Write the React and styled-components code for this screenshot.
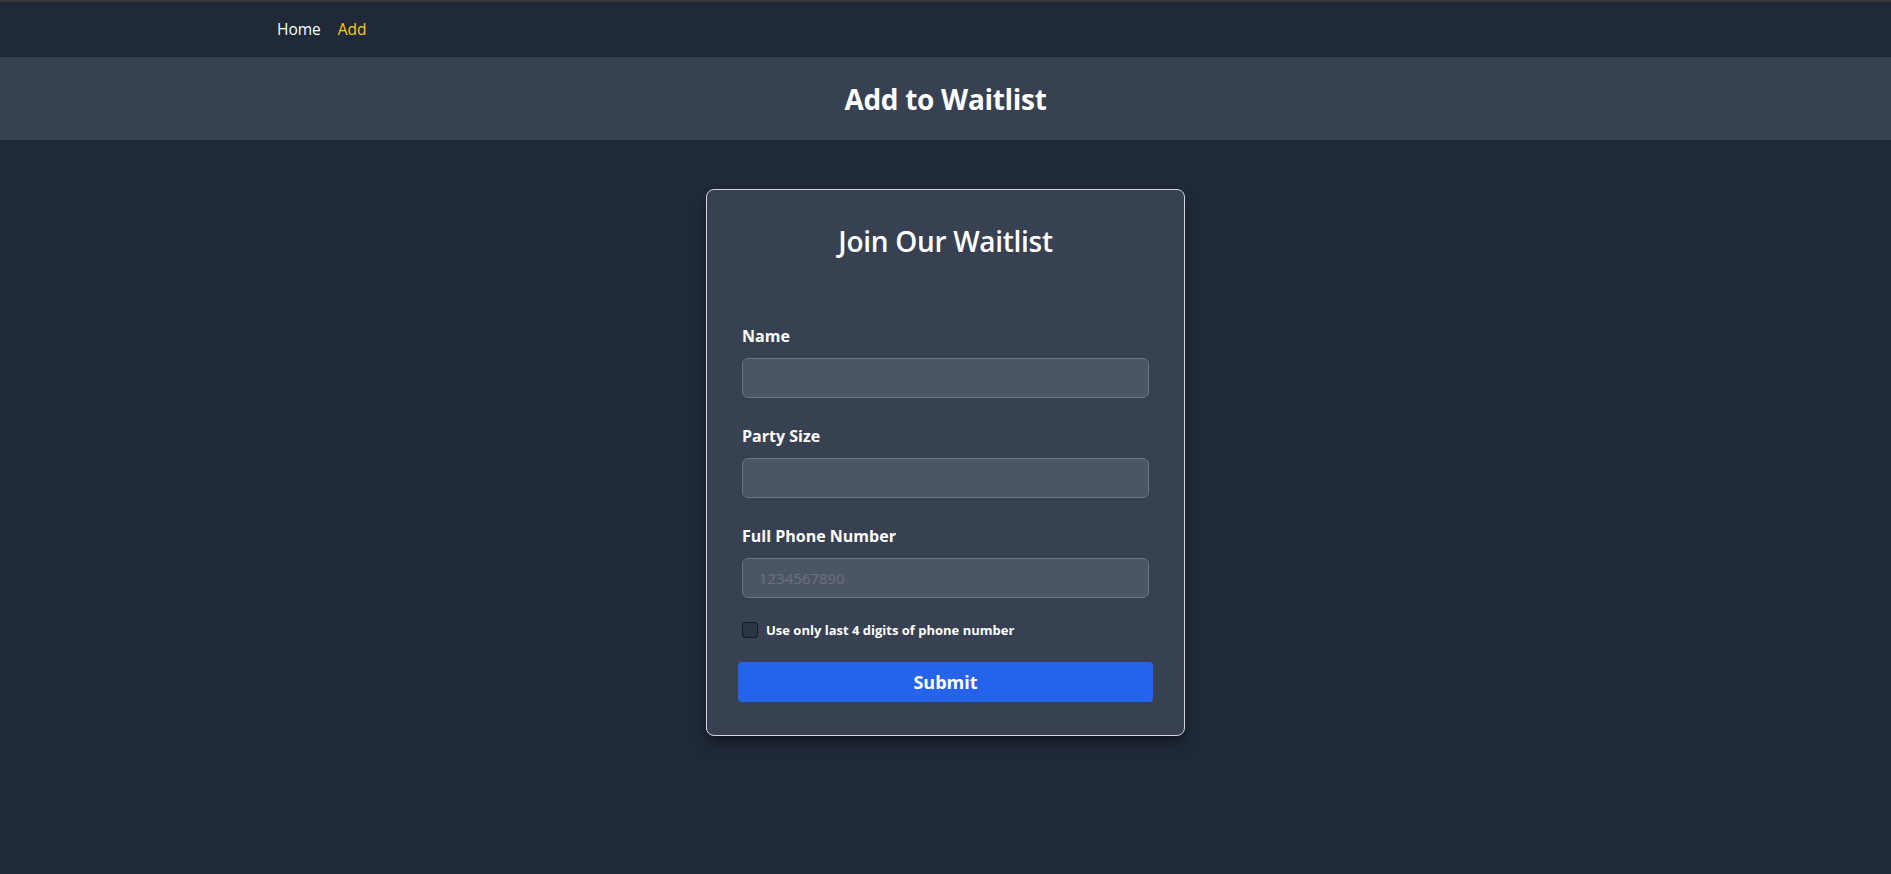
import React, {useState} from 'react';
import styled, {createGlobalStyle} from 'styled-components';

const GlobalStyle = createGlobalStyle`
  * {
    box-sizing: border-box;
  }
  body {
    margin: 0;
    background: #1f2937;
    font-family: "Open Sans", "Noto Sans", sans-serif;
    color: #fff;
  }
`;

const Page = styled.div`
  min-height: 874px;
  background: #1f2937;
  border-top: 2px solid #353535;
`;

const Nav = styled.nav`
  height: 55px;
  background: #1f2937;
`;

const NavInner = styled.div`
  max-width: 1337px;
  margin: 0 auto;
  height: 100%;
  display: flex;
  align-items: center;
  gap: 17px;
  padding-bottom: 2px;
`;

const NavLink = styled.a`
  font-size: 15.5px;
  color: ${props => (props.$active ? '#facc15' : '#fff')};
  text-decoration: none;
  cursor: pointer;
`;

const Banner = styled.header`
  height: 83px;
  background: #374151;
  display: flex;
  align-items: center;
  justify-content: center;
`;

const BannerTitle = styled.h1`
  margin: 0;
  font-size: 28px;
  font-weight: 700;
  letter-spacing: -0.3px;
`;

const Main = styled.main`
  display: flex;
  justify-content: center;
  padding-top: 49px;
`;

const Card = styled.form`
  width: 479px;
  background: #374151;
  border: 1px solid #d1d5db;
  border-radius: 8px;
  padding: 35px 35px 33px;
  box-shadow: 0 10px 15px -3px rgba(0, 0, 0, 0.35), 0 4px 6px -4px rgba(0, 0, 0, 0.3);
`;

const CardTitle = styled.h2`
  margin: 0 0 67px;
  text-align: center;
  font-size: 28px;
  font-weight: 600;
  line-height: 32px;
  letter-spacing: -0.3px;
`;

const Field = styled.div`
  margin-bottom: 26px;
`;

const Label = styled.label`
  display: block;
  font-size: 16px;
  font-weight: 700;
  line-height: 24px;
  margin-bottom: 10px;
`;

const Input = styled.input`
  display: block;
  width: 100%;
  height: 40px;
  padding: 0 16px;
  background: #4b5563;
  border: 1px solid #6b7280;
  border-radius: 6px;
  color: #fff;
  font-family: inherit;
  font-size: 15px;
  outline: none;

  &::placeholder {
    color: #6b7280;
  }
`;

const CheckRow = styled.label`
  display: flex;
  align-items: center;
  gap: 8px;
  margin-top: -4px;
  margin-bottom: 22px;
  font-size: 13px;
  font-weight: 700;
  line-height: 20px;
  cursor: pointer;
`;

const Box = styled.input`
  appearance: none;
  margin: 0;
  width: 16px;
  height: 16px;
  border: 1px solid #111827;
  border-radius: 3px;
  background: #2b3545;
  cursor: pointer;

  &:checked {
    background: #2563eb;
    border-color: #2563eb;
  }
`;

const Submit = styled.button`
  display: block;
  width: calc(100% + 8px);
  margin: 0 -4px;
  height: 40px;
  border: none;
  border-radius: 4px;
  background: #2563eb;
  color: #fff;
  font-family: inherit;
  font-size: 18px;
  font-weight: 700;
  cursor: pointer;
`;

export default function App() {
  const [lastFour, setLastFour] = useState(false);

  return (
    <Page>
      <GlobalStyle/>
      <Nav>
        <NavInner>
          <NavLink>Home</NavLink>
          <NavLink $active>Add</NavLink>
        </NavInner>
      </Nav>
      <Banner>
        <BannerTitle>Add to Waitlist</BannerTitle>
      </Banner>
      <Main>
        <Card onSubmit={e => e.preventDefault()}>
          <CardTitle>Join Our Waitlist</CardTitle>
          <Field>
            <Label htmlFor="name">Name</Label>
            <Input id="name" type="text"/>
          </Field>
          <Field>
            <Label htmlFor="party">Party Size</Label>
            <Input id="party" type="number"/>
          </Field>
          <Field>
            <Label htmlFor="phone">Full Phone Number</Label>
            <Input id="phone" type="tel" placeholder="1234567890"/>
          </Field>
          <CheckRow>
            <Box type="checkbox" checked={lastFour} onChange={e => setLastFour(e.target.checked)}/>
            Use only last 4 digits of phone number
          </CheckRow>
          <Submit type="submit">Submit</Submit>
        </Card>
      </Main>
    </Page>
  );
}
